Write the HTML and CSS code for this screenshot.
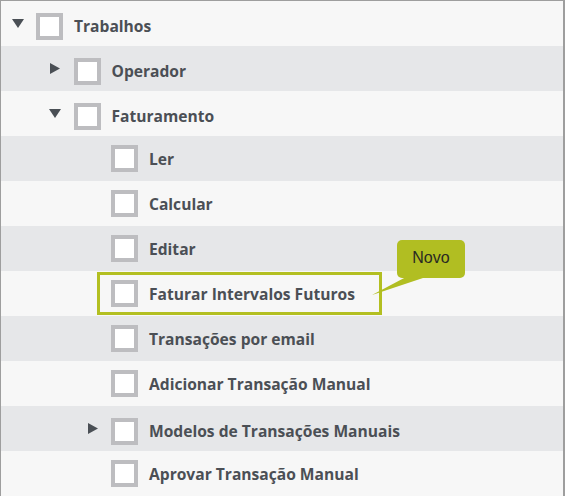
FILE: index.html
```html
<!DOCTYPE html>
<html lang="pt">
<head>
<meta charset="utf-8">
<title>Permissões</title>
<link rel="stylesheet" href="styles.css">
</head>
<body>
<div class="tree">
  <div class="row light l0 has-toggle">
    <span class="toggle"><svg class="arrow-down" width="12" height="9" viewBox="0 0 12 9"><polygon points="0,0 12,0 6,9"/></svg></span>
    <span class="item"><span class="check"></span><span class="label">Trabalhos</span></span>
  </div>
  <div class="row gray l1 has-toggle">
    <span class="toggle"><svg class="arrow-right" width="10" height="11" viewBox="0 0 10 11"><polygon points="0,0 10,5.5 0,11"/></svg></span>
    <span class="item"><span class="check"></span><span class="label">Operador</span></span>
  </div>
  <div class="row light l1 has-toggle">
    <span class="toggle"><svg class="arrow-down" width="12" height="9" viewBox="0 0 12 9"><polygon points="0,0 12,0 6,9"/></svg></span>
    <span class="item"><span class="check"></span><span class="label">Faturamento</span></span>
  </div>
  <div class="row gray l2">
    <span class="toggle"></span>
    <span class="item"><span class="check"></span><span class="label">Ler</span></span>
  </div>
  <div class="row light l2">
    <span class="toggle"></span>
    <span class="item"><span class="check"></span><span class="label">Calcular</span></span>
  </div>
  <div class="row gray l2">
    <span class="toggle"></span>
    <span class="item"><span class="check"></span><span class="label">Editar</span></span>
  </div>
  <div class="row light l2 highlighted">
    <span class="toggle"></span>
    <span class="item hl"><span class="check"></span><span class="label">Faturar Intervalos Futuros</span></span>
    <div class="tooltip">
      <svg class="tail" width="60" height="24" viewBox="0 0 60 24"><polygon points="0,20 34,2 54,2"/></svg>
      <span class="tip-text">Novo</span>
    </div>
  </div>
  <div class="row gray l2">
    <span class="toggle"></span>
    <span class="item"><span class="check"></span><span class="label">Transações por email</span></span>
  </div>
  <div class="row light l2">
    <span class="toggle"></span>
    <span class="item"><span class="check"></span><span class="label">Adicionar Transação Manual</span></span>
  </div>
  <div class="row gray l2 has-toggle">
    <span class="toggle"><svg class="arrow-right" width="10" height="11" viewBox="0 0 10 11"><polygon points="0,0 10,5.5 0,11"/></svg></span>
    <span class="item"><span class="check"></span><span class="label">Modelos de Transações Manuais</span></span>
  </div>
  <div class="row light l2">
    <span class="toggle"></span>
    <span class="item"><span class="check"></span><span class="label">Aprovar Transação Manual</span></span>
  </div>
</div>
</body>
</html>
```

FILE: styles.css
```css
html, body {
  margin: 0;
  padding: 0;
  background: #f7f7f7;
}

.tree {
  box-sizing: border-box;
  width: 565px;
  height: 496px;
  overflow: hidden;
  border-top: 1px solid #9e9e9e;
  border-left: 1px solid #9e9e9e;
  border-right: 2px solid #9e9e9e;
  font-family: "Open Sans", "Noto Sans", sans-serif;
}

.row {
  position: relative;
  display: flex;
  align-items: center;
  height: 45px;
  box-sizing: border-box;
}

.light { background: #f7f7f7; }
.gray { background: #e6e7e9; }

.l0 { padding-left: 10px; }
.l1 { padding-left: 47.5px; }
.l2 { padding-left: 85px; }

.toggle {
  display: flex;
  align-items: center;
  justify-content: center;
  width: 13px;
  height: 12px;
  margin-right: 12px;
  flex: none;
}

.toggle svg polygon { fill: #4a4f55; }

.item {
  display: flex;
  align-items: center;
}

.has-toggle .item { padding-top: 5px; }

.check {
  box-sizing: border-box;
  width: 27px;
  height: 27px;
  border: 4px solid #bdbdc0;
  background: #ffffff;
  flex: none;
  margin-right: 11px;
}

.label {
  font-size: 15.6px;
  font-weight: 700;
  line-height: 20px;
  color: #4b4f55;
  white-space: nowrap;
}

.hl {
  box-sizing: border-box;
  height: 43px;
  margin-left: -14px;
  padding: 0 24px 0 11px;
  border: 3px solid #b3bf21;
}

.tooltip {
  position: absolute;
  left: 396px;
  top: -31px;
  width: 68px;
  height: 38px;
  border-radius: 5px;
  background: #b1be22;
  display: flex;
  align-items: center;
  justify-content: center;
}

.tail {
  position: absolute;
  left: -25px;
  top: 35px;
}

.tail polygon { fill: #b1be22; }

.tip-text {
  position: relative;
  font-family: "Liberation Sans", Arial, sans-serif;
  font-size: 16px;
  color: #2a2a22;
  padding-bottom: 2px;
}
```
